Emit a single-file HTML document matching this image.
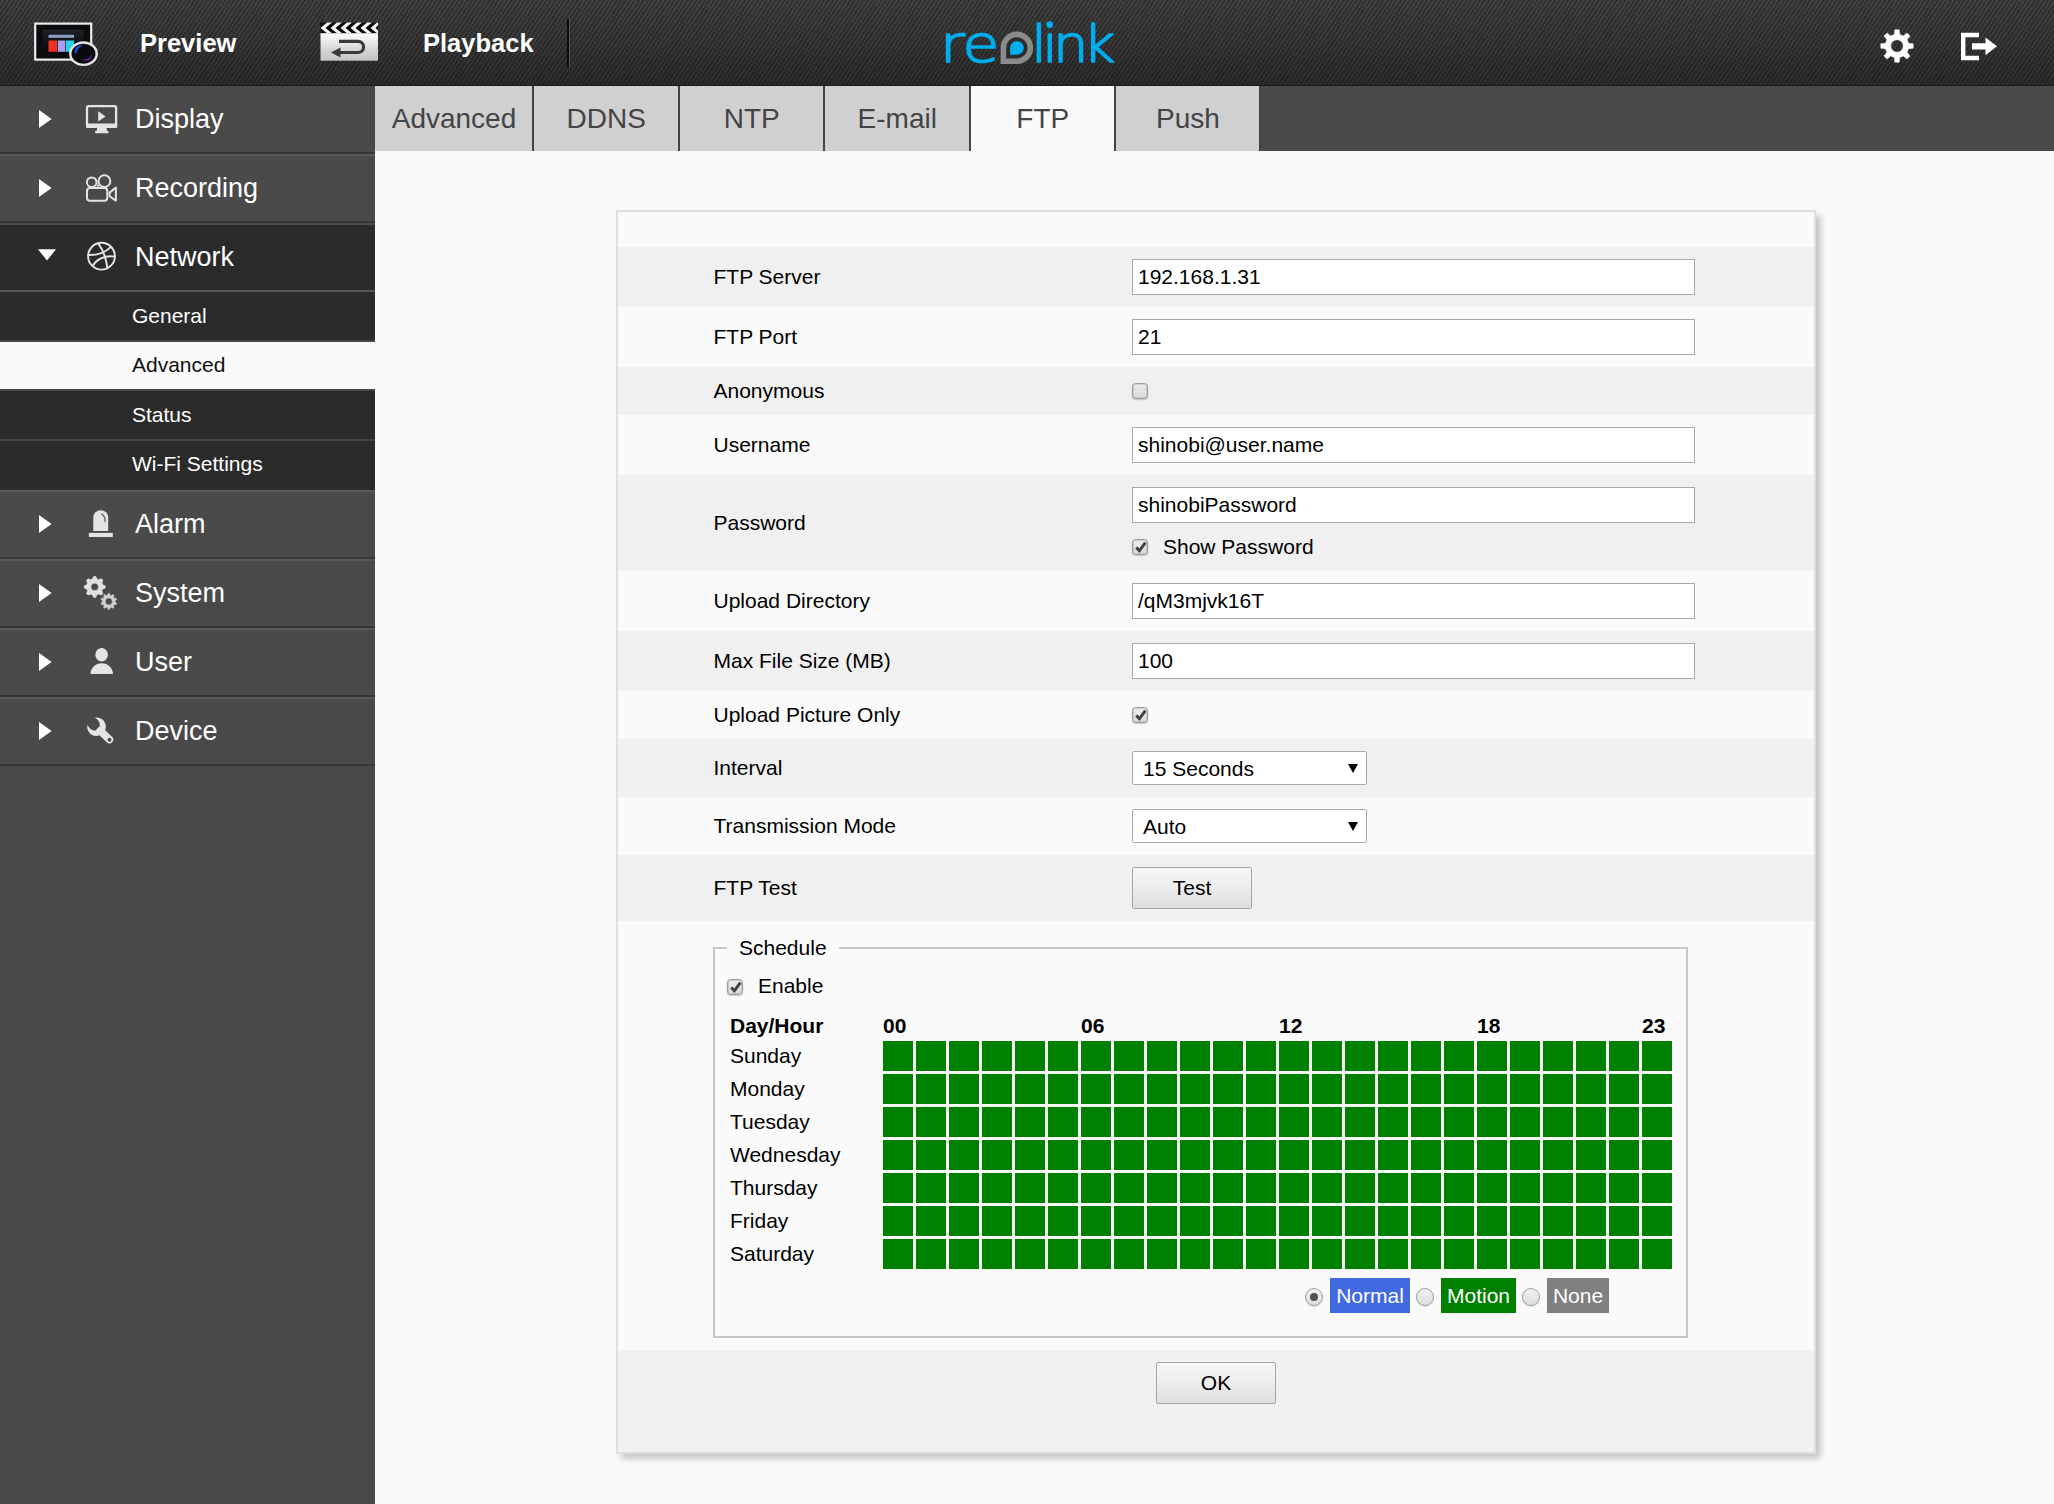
<!DOCTYPE html>
<html lang="en">
<head>
<meta charset="utf-8">
<title>Reolink</title>
<style>
*{box-sizing:border-box;margin:0;padding:0}
html,body{width:2054px;height:1504px;background:#fafafa}
body{position:relative;font-family:"Liberation Sans",Arial,sans-serif;color:#000;font-size:21px}
.abs{position:absolute}
/* header */
#hdr{position:absolute;left:0;top:0;width:2054px;height:86px;
 background:
  repeating-linear-gradient(124deg,rgba(0,0,0,.27) 0,rgba(0,0,0,.27) 1.8px,rgba(0,0,0,0) 1.8px,rgba(0,0,0,0) 3.65px),
  linear-gradient(180deg,#424242 0%,#393939 50%,#2e2e2e 100%);
 border-bottom:1px solid #1c1c1c}
#hdr .nav{position:absolute;top:0;height:86px;line-height:86px;color:#fff;font-weight:bold;font-size:25.5px;white-space:nowrap}
#hdr .vsep{position:absolute;left:566.5px;top:18.5px;width:3.5px;height:48.5px;background:linear-gradient(90deg,#0d0d0d 0,#0d0d0d 54%,#565656 54%,#565656 100%)}
/* sidebar */
#side{position:absolute;left:0;top:86px;width:375px;height:1418px;background:#4a4a4a}
.mi{position:absolute;left:0;width:375px;height:69px;color:#fff;font-size:27px;line-height:68.5px}
.mi:before{content:"";position:absolute;left:0;top:0;width:375px;height:1.5px;background:#5a5a5a}
.mi:after{content:"";position:absolute;left:0;bottom:0;width:375px;height:2px;background:#353535}
.mi .tx{position:absolute;left:135px;top:0;white-space:nowrap}
.mi.open{background:#2b2b2b}
.mi:first-child:before{display:none}
.mi.open:before{background:#4e4e4e;height:2px}
.mi.open:after{background:#555;height:2px}
.mi svg{position:absolute}
.si{position:absolute;left:0;width:375px;height:49.3px;background:#2b2b2b;color:#fff;font-size:21px;line-height:48px}
.si:after{content:"";position:absolute;left:0;bottom:0;width:375px;height:2px;background:#464646}
.si:last-child:after{display:none}
.si .tx{position:absolute;left:132px;top:0;white-space:nowrap}
.si.sel{background:#fafafa;color:#111}
/* tabs */
#tabs{position:absolute;left:375px;top:86px;width:1679px;height:65px;background:#4a4a4a}
.tab{position:absolute;top:0;height:65px;line-height:65px;text-align:center;font-size:28px;color:#444;background:#d0d0d0;border-right:2px solid #444;padding-left:1px}
.tab.sel{background:#fafafa}
/* panel */
#panel{position:absolute;left:616px;top:210px;width:1200px;height:1244px;background:#fafafa;border:2px solid #dedede;box-shadow:4.5px 4.5px 7px rgba(0,0,0,.23)}
.row{position:absolute;left:618px;width:1196px}
.row.g{background:#f0f0f0}
.lbl{position:absolute;left:713.5px;white-space:nowrap;font-size:21px;line-height:24px}
.inp{position:absolute;left:1132px;width:563px;height:36px;background:#fff;border:1.5px solid #a9a9a9;font-size:21px;line-height:33px;padding-left:5px;white-space:nowrap}
.sel2{position:absolute;left:1132px;width:235px;height:34px;background:#fff;border:1.5px solid #a9a9a9;font-size:21px;line-height:33.5px;padding-left:10px;border-radius:2px;white-space:nowrap}
.sel2 i{position:absolute;right:8.5px;top:12px;width:0;height:0;border-left:5.5px solid transparent;border-right:5.5px solid transparent;border-top:9px solid #000}
.btn{position:absolute;width:120px;height:42px;border:1.5px solid #a6a6a6;background:linear-gradient(180deg,#f6f6f6 0%,#eee 45%,#ddd 100%);font-size:21px;line-height:39px;text-align:center;border-radius:2px}
.cb{position:absolute;width:16px;height:16px;border:1px solid #9c9c9c;border-radius:3.5px;background:linear-gradient(180deg,#ececec,#dadada);box-shadow:inset 0 0 0 .6px #b4b4b4,0 1px 1.5px rgba(0,0,0,.2)}
.cb svg{position:absolute;left:.8px;top:0}
.rd{position:absolute;width:18px;height:18px;border:1px solid #9e9e9e;border-radius:50%;background:linear-gradient(180deg,#f0f0f0,#ddd);box-shadow:0 1px 1px rgba(0,0,0,.12)}
.rd.on:after{content:"";position:absolute;left:4px;top:4px;width:8px;height:8px;border-radius:50%;background:#505050}
.tag{position:absolute;top:1278px;height:35px;line-height:35.5px;color:#fff;font-size:21px;text-align:center}
#fs{position:absolute;left:713px;top:947px;width:975px;height:391px;border:2px solid #c6c6c6}
#fs .lg{position:absolute;left:12px;top:-13.5px;padding:0 12px 0 12px;background:#fafafa;font-size:21px;line-height:24px}
.day{position:absolute;left:730px;font-size:21px;line-height:24px;white-space:nowrap}
.hr{position:absolute;top:1014px;font-size:21px;line-height:24px;font-weight:bold;white-space:nowrap}
#grid{position:absolute;left:883px;top:1041px;width:792px;height:231px;
 background:
  repeating-linear-gradient(90deg,#008000 0,#008000 30px,#fafafa 30px,#fafafa 33px),
  #fafafa}
#gridh{position:absolute;left:883px;top:1041px;width:792px;height:231px;
 background:repeating-linear-gradient(180deg,rgba(250,250,250,0) 0,rgba(250,250,250,0) 30px,#fafafa 30px,#fafafa 33px)}
</style>
</head>
<body>
<div id="hdr">
 <!-- preview icon -->
 <svg class="abs" style="left:30px;top:18px" width="72" height="52" viewBox="30 18 72 52">
  <defs>
   <linearGradient id="scr" x1="0" y1="0" x2="0" y2="1"><stop offset="0" stop-color="#1d2228"/><stop offset="1" stop-color="#07080a"/></linearGradient>
   <linearGradient id="clap" x1="0" y1="0" x2="0" y2="1"><stop offset="0" stop-color="#fff"/><stop offset=".55" stop-color="#d8d8d8"/><stop offset="1" stop-color="#c4c4c4"/></linearGradient>
  </defs>
  <rect x="35.2" y="23.6" width="56" height="36" fill="#0b0c0e" stroke="#ececec" stroke-width="2.2"/>
  <rect x="42.5" y="29.5" width="41" height="24" fill="url(#scr)"/>
  <rect x="48.5" y="34.8" width="25.5" height="3" fill="#8fa0c8"/>
  <rect x="48.5" y="40.5" width="8.6" height="11.3" fill="#f0321e"/>
  <rect x="57.8" y="40.5" width="7.6" height="11.3" fill="#a99cf2"/>
  <rect x="66" y="40.5" width="8" height="11.3" fill="#27d3ea"/>
  <ellipse cx="83.5" cy="53.7" rx="13.2" ry="11.2" fill="#0a0a0e" stroke="#e6e6e6" stroke-width="2.4"/>
  <path d="M74.5 52 C75 46.5 79 44.5 83.5 45.5 C79.5 46.5 77 49 76.5 54Z" fill="#1f4fd6"/>
  <path d="M80.5 59.3 C86 60.5 90.5 58.5 91.5 54 C92.5 59 87 62.5 80.5 59.3Z" fill="#7a22d8"/>
 </svg>
 <div class="nav" style="left:140px">Preview</div>
 <!-- playback icon -->
 <svg class="abs" style="left:318px;top:20px" width="64" height="44" viewBox="318 20 64 44">
  <rect x="320.5" y="33" width="57.5" height="27.7" fill="url(#clap)"/>
  <rect x="320.5" y="22.6" width="57.5" height="10.6" fill="#0c0c0c"/>
  <g fill="#f2f2f2">
   <path d="M320.5 27.9 L327 22.6 L332 22.6 L325.5 27.9 L332 33.2 L327 33.2Z"/>
   <path d="M330.5 27.9 L337 22.6 L342 22.6 L335.5 27.9 L342 33.2 L337 33.2Z"/>
   <path d="M340.5 27.9 L347 22.6 L352 22.6 L345.5 27.9 L352 33.2 L347 33.2Z"/>
   <path d="M350.5 27.9 L357 22.6 L362 22.6 L355.5 27.9 L362 33.2 L357 33.2Z"/>
   <path d="M360.5 27.9 L367 22.6 L372 22.6 L365.5 27.9 L372 33.2 L367 33.2Z"/>
   <path d="M370.5 27.9 L377 22.6 L378 22.6 L378 25 L375.5 27.9 L378 30.5 L378 33.2 L377 33.2Z"/>
  </g>
  <path d="M339 41.3 H358 A5.6 5.6 0 0 1 358 52.5 H338" fill="none" stroke="#3a3a3a" stroke-width="3.2"/>
  <path d="M331 52.5 L340.5 47.5 L340.5 57.5Z" fill="#3a3a3a"/>
 </svg>
 <div class="nav" style="left:423px">Playback</div>
 <div class="vsep"></div>
 <!-- logo -->
 <svg class="abs" style="left:930px;top:10px" width="200" height="66" viewBox="930 10 200 66" role="img" aria-label="reolink"><title>reolink</title>
  <g font-family="'DejaVu Sans Light','DejaVu Sans',sans-serif" font-weight="200" font-size="51.2" fill="#00adee" stroke="#00adee" stroke-width="1.7" stroke-linejoin="round">
   <text transform="scale(1.170 1)" x="803.42 822.66" y="61.9">re</text>
   <text transform="scale(1.090 1)" x="946.08 956.13 966.17 993.57" y="61.9">link</text>
  </g>
  <circle cx="1049.7" cy="24.6" r="3.4" fill="#00adee"/>
  <path d="M1000.6 64 V47.9 A16.25 16.25 0 1 1 1016.85 64.1 Z" fill="#8a8a8a"/>
  <path d="M1006.2 58.5 V47.9 A10.65 10.65 0 1 1 1016.85 58.5 Z" fill="#2b2b2b"/>
  <path d="M1010.1 54.7 V47.9 A6.85 6.85 0 1 1 1016.95 54.75 Z" fill="#00adee"/>
 </svg>
 <!-- gear -->
 <svg class="abs" style="left:1878.6px;top:27.6px" width="36" height="36" viewBox="0 0 36 36"><path fill="#fff" fill-rule="evenodd" stroke="#fff" stroke-width="0.5" stroke-linejoin="round" d="M29.59 15.31 L34.25 15.82 L34.25 20.18 L29.59 20.69 L28.10 24.30 L31.04 27.95 L27.95 31.04 L24.30 28.10 L20.69 29.59 L20.18 34.25 L15.82 34.25 L15.31 29.59 L11.70 28.10 L8.05 31.04 L4.96 27.95 L7.90 24.30 L6.41 20.69 L1.75 20.18 L1.75 15.82 L6.41 15.31 L7.90 11.70 L4.96 8.05 L8.05 4.96 L11.70 7.90 L15.31 6.41 L15.82 1.75 L20.18 1.75 L20.69 6.41 L24.30 7.90 L27.95 4.96 L31.04 8.05 L28.10 11.70Z M11.80 18.00 a6.20 6.20 0 1 0 12.40 0 a6.20 6.20 0 1 0 -12.40 0Z"/></svg>
 <!-- logout -->
 <svg class="abs" style="left:1958px;top:30px" width="42" height="33" viewBox="1958 30 42 33">
  <path d="M1979 35 H1963.2 V58 H1979" fill="none" stroke="#fff" stroke-width="4.4"/>
  <path d="M1972 43.2 H1985.5 V37.5 L1997 46.3 L1985.5 55.2 V49.5 H1972Z" fill="#fff"/>
 </svg>
</div>
<div id="side">
 <div class="mi" style="top:-1.0px;line-height:69.5px"><svg style="left:36px;top:22.9px" width="20" height="22" viewBox="0 0 20 22"><path d="M3 2 L15.6 11 L3 20Z" fill="#fff"/></svg><svg style="left:80px;top:15.0px" width="44" height="40" viewBox="80 100 44 40"><rect x="87" y="106.2" width="29.1" height="20.6" rx="1.6" fill="none" stroke="#e4e4e4" stroke-width="2.3"/><rect x="86" y="123.5" width="31.2" height="4.4" rx="1.2" fill="#e4e4e4"/><path d="M97.2 127.5 H106.4 L107 131 H108.4 V133.2 H95.1 V131 H96.6Z" fill="#e4e4e4"/><path d="M98.2 111.3 L105.6 116.4 L98.2 121.6Z" fill="#e4e4e4"/></svg><span class="tx">Display</span></div>
 <div class="mi" style="top:68.0px;line-height:69.5px"><svg style="left:36px;top:23.2px" width="20" height="22" viewBox="0 0 20 22"><path d="M3 2 L15.6 11 L3 20Z" fill="#fff"/></svg><svg style="left:80px;top:15.0px" width="44" height="40" viewBox="80 169 44 40"><g fill="none" stroke="#e4e4e4" stroke-width="2"><circle cx="91.7" cy="182.2" r="4.8"/><circle cx="104.4" cy="181.2" r="5.9"/><rect x="87" y="188" width="20.3" height="12.8" rx="3"/><path d="M109.6 192.6 L115.9 187.6 V200.6 L109.6 196.2Z" stroke-linejoin="round"/></g><circle cx="97.8" cy="185.6" r="1.2" fill="#e4e4e4"/></svg><span class="tx">Recording</span></div>
 <div class="mi open" style="top:137.0px;line-height:69.5px"><svg style="left:36px;top:24.3px" width="22" height="16" viewBox="0 0 22 16"><path d="M2 2.3 H20 L11 13.6Z" fill="#fff"/></svg><svg style="left:80px;top:13.0px" width="44" height="40" viewBox="80 236 44 40"><g fill="none" stroke="#e4e4e4" stroke-width="1.9" stroke-linecap="round"><circle cx="101.5" cy="256.2" r="13.4"/><path d="M98.3 243.6 C102.5 249 106 258 107.4 268"/><path d="M88.4 255 C95 255.2 104 253.8 110.4 247.4"/><path d="M92.8 265.6 C96 260 104 255 114.6 256.6"/></g></svg><span class="tx">Network</span></div>
 <div class="mi" style="top:404.2px;line-height:68.0px"><svg style="left:36px;top:23.3px" width="20" height="22" viewBox="0 0 20 22"><path d="M3 2 L15.6 11 L3 20Z" fill="#fff"/></svg><svg style="left:80px;top:12.8px" width="44" height="40" viewBox="80 503 44 40"><path d="M93.3 531 V517.6 A7.45 7.45 0 0 1 108.2 517.6 V531Z" fill="#e4e4e4"/><rect x="88.9" y="532.9" width="23.9" height="4.1" fill="#e4e4e4"/><path d="M101.8 514.2 C104.2 515.6 105.2 518.4 105.2 521.6" fill="none" stroke="#666" stroke-width="1.4" stroke-linecap="round"/></svg><span class="tx">Alarm</span></div>
 <div class="mi" style="top:473.2px;line-height:68.0px"><svg style="left:36px;top:23.3px" width="20" height="22" viewBox="0 0 20 22"><path d="M3 2 L15.6 11 L3 20Z" fill="#fff"/></svg><svg style="left:80px;top:12.8px" width="44" height="44" viewBox="80 572 44 44"><path d="M102.48 584.64 L105.15 585.91 L105.15 587.89 L102.48 589.16 L101.80 590.80 L102.79 593.59 L101.39 594.99 L98.60 594.00 L96.96 594.68 L95.69 597.35 L93.71 597.35 L92.44 594.68 L90.80 594.00 L88.01 594.99 L86.61 593.59 L87.60 590.80 L86.92 589.16 L84.25 587.89 L84.25 585.91 L86.92 584.64 L87.60 583.00 L86.61 580.21 L88.01 578.81 L90.80 579.80 L92.44 579.12 L93.71 576.45 L95.69 576.45 L96.96 579.12 L98.60 579.80 L101.39 578.81 L102.79 580.21 L101.80 583.00Z M90.80 586.90 a3.90 3.90 0 1 0 7.80 0 a3.90 3.90 0 1 0 -7.80 0Z" fill="#e0e0e0" stroke="#e0e0e0" stroke-width=".8" stroke-linejoin="round" fill-rule="evenodd"/><path d="M110.21 607.54 L109.40 609.38 L108.20 609.38 L107.39 607.54 L106.33 607.20 L104.60 608.21 L103.62 607.50 L104.05 605.54 L103.40 604.64 L101.40 604.44 L101.03 603.29 L102.52 601.95 L102.52 600.85 L101.03 599.51 L101.40 598.36 L103.40 598.16 L104.05 597.26 L103.62 595.30 L104.60 594.59 L106.33 595.60 L107.39 595.26 L108.20 593.42 L109.40 593.42 L110.21 595.26 L111.27 595.60 L113.00 594.59 L113.98 595.30 L113.55 597.26 L114.20 598.16 L116.20 598.36 L116.57 599.51 L115.08 600.85 L115.08 601.95 L116.57 603.29 L116.20 604.44 L114.20 604.64 L113.55 605.54 L113.98 607.50 L113.00 608.21 L111.27 607.20Z M105.30 601.40 a3.50 3.50 0 1 0 7.00 0 a3.50 3.50 0 1 0 -7.00 0Z" fill="#cfcfcf" stroke="#cfcfcf" stroke-width=".6" stroke-linejoin="round" fill-rule="evenodd"/></svg><span class="tx">System</span></div>
 <div class="mi" style="top:542.2px;line-height:68.0px"><svg style="left:36px;top:23.3px" width="20" height="22" viewBox="0 0 20 22"><path d="M3 2 L15.6 11 L3 20Z" fill="#fff"/></svg><svg style="left:80px;top:12.8px" width="44" height="40" viewBox="80 641 44 40"><ellipse cx="101.6" cy="654.8" rx="6.3" ry="6.7" fill="#e4e4e4"/><path d="M90.4 674.1 A11.3 10.9 0 0 1 113 674.1Z" fill="#e4e4e4"/></svg><span class="tx">User</span></div>
 <div class="mi" style="top:611.2px;line-height:68.0px"><svg style="left:36px;top:23.3px" width="20" height="22" viewBox="0 0 20 22"><path d="M3 2 L15.6 11 L3 20Z" fill="#fff"/></svg><svg style="left:80px;top:12.8px" width="44" height="40" viewBox="80 710 44 40"><path d="M94.6 717.6 A9.3 9.3 0 1 1 87.4 724.9 C89 727.6 91.2 730.2 94.4 730.4 A5.2 5.2 0 0 0 99.8 725 C99.8 721.6 97.4 719.2 94.6 717.6Z" fill="#e4e4e4"/><path d="M100.2 730.8 L109.4 739.6" stroke="#e4e4e4" stroke-width="7.6" stroke-linecap="round"/><circle cx="109.5" cy="739.7" r="2" fill="#4a4a4a"/></svg><span class="tx">Device</span></div>
 <div class="si" style="top:206.00px;height:49.5px;line-height:48px"><span class="tx">General</span></div>
 <div class="si sel" style="top:255.50px;height:49.5px;line-height:46px"><span class="tx">Advanced</span></div>
 <div class="si" style="top:305.00px;height:49.5px;line-height:48px"><span class="tx">Status</span></div>
 <div class="si" style="top:354.50px;height:49.7px;line-height:46px"><span class="tx">Wi-Fi Settings</span></div>
</div>
<div id="tabs">
 <div class="tab" style="left:0.0px;width:159.0px">Advanced</div>
 <div class="tab" style="left:159.0px;width:145.5px">DDNS</div>
 <div class="tab" style="left:304.5px;width:145.5px">NTP</div>
 <div class="tab" style="left:450.0px;width:145.5px">E-mail</div>
 <div class="tab sel" style="left:595.5px;width:145.5px">FTP</div>
 <div class="tab" style="left:741.0px;width:145.0px">Push</div>
</div>
</div>
<div id="panel"></div>
<div class="row g" style="top:247px;height:60px"></div>
<div class="row " style="top:307px;height:60px"></div>
<div class="row g" style="top:367px;height:48px"></div>
<div class="row " style="top:415px;height:60px"></div>
<div class="row g" style="top:475px;height:96px"></div>
<div class="row " style="top:571px;height:60px"></div>
<div class="row g" style="top:631px;height:60px"></div>
<div class="row " style="top:691px;height:48px"></div>
<div class="row g" style="top:739px;height:58px"></div>
<div class="row " style="top:797px;height:58px"></div>
<div class="row g" style="top:855px;height:66px"></div>
<div class="row g" style="top:1350px;height:102px"></div>
<div class="lbl" style="top:265px">FTP Server</div>
<div class="lbl" style="top:325px">FTP Port</div>
<div class="lbl" style="top:379px">Anonymous</div>
<div class="lbl" style="top:433px">Username</div>
<div class="lbl" style="top:511px">Password</div>
<div class="lbl" style="top:589px">Upload Directory</div>
<div class="lbl" style="top:649px">Max File Size (MB)</div>
<div class="lbl" style="top:703px">Upload Picture Only</div>
<div class="lbl" style="top:756px">Interval</div>
<div class="lbl" style="top:814px">Transmission Mode</div>
<div class="lbl" style="top:876px">FTP Test</div>
<div class="inp" style="top:259px">192.168.1.31</div>
<div class="inp" style="top:319px">21</div>
<div class="inp" style="top:427px">shinobi@user.name</div>
<div class="inp" style="top:487px">shinobiPassword</div>
<div class="inp" style="top:583px">/qM3mjvk16T</div>
<div class="inp" style="top:643px">100</div>
<div class="cb" style="left:1132px;top:383px"></div>
<div class="cb" style="left:1132px;top:539px"><svg width="14" height="14" viewBox="0 0 14 14"><path d="M2.3 7.4 L5.4 10.8 L11.4 2.6" fill="none" stroke="#404040" stroke-width="2.9"/></svg></div>
<div class="lbl" style="left:1163px;top:535px">Show Password</div>
<div class="cb" style="left:1132px;top:707px"><svg width="14" height="14" viewBox="0 0 14 14"><path d="M2.3 7.4 L5.4 10.8 L11.4 2.6" fill="none" stroke="#404040" stroke-width="2.9"/></svg></div>
<div class="sel2" style="top:751px">15 Seconds<i></i></div>
<div class="sel2" style="top:809px">Auto<i></i></div>
<div class="btn" style="left:1132px;top:867px">Test</div>
<div id="fs"><div class="lg">Schedule</div></div>
<div class="cb" style="left:727px;top:979px"><svg width="14" height="14" viewBox="0 0 14 14"><path d="M2.3 7.4 L5.4 10.8 L11.4 2.6" fill="none" stroke="#404040" stroke-width="2.9"/></svg></div>
<div class="lbl" style="left:758px;top:974px">Enable</div>
<div class="day" style="top:1014px;font-weight:bold">Day/Hour</div>
<div class="day" style="top:1044px">Sunday</div>
<div class="day" style="top:1077px">Monday</div>
<div class="day" style="top:1110px">Tuesday</div>
<div class="day" style="top:1143px">Wednesday</div>
<div class="day" style="top:1176px">Thursday</div>
<div class="day" style="top:1209px">Friday</div>
<div class="day" style="top:1242px">Saturday</div>
<div class="hr" style="left:883px">00</div>
<div class="hr" style="left:1081px">06</div>
<div class="hr" style="left:1279px">12</div>
<div class="hr" style="left:1477px">18</div>
<div class="hr" style="left:1642px">23</div>
<div id="grid"></div><div id="gridh"></div>
<div class="rd on" style="left:1305px;top:1288px"></div><div class="tag" style="left:1330px;width:80px;background:#4169e1">Normal</div>
<div class="rd" style="left:1416px;top:1288px"></div><div class="tag" style="left:1441px;width:75px;background:#008000">Motion</div>
<div class="rd" style="left:1522px;top:1288px"></div><div class="tag" style="left:1547px;width:62px;background:#808080">None</div>
<div class="btn" style="left:1156px;top:1362px">OK</div>
</body>
</html>
